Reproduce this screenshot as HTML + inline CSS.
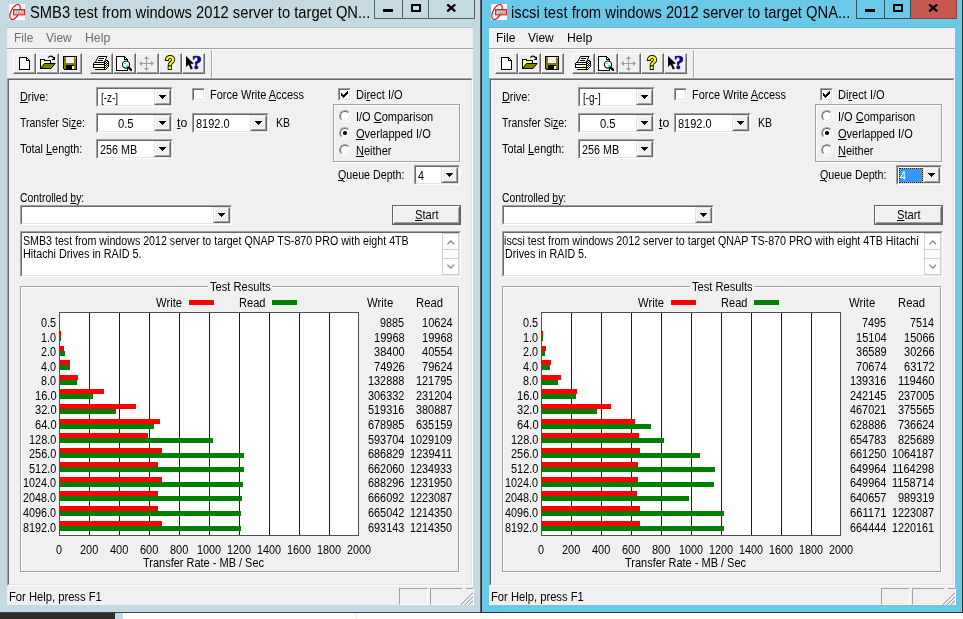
<!DOCTYPE html>
<html><head><meta charset="utf-8"><title>ATTO Disk Benchmark</title>
<style>
html,body{margin:0;padding:0;}
body{width:963px;height:619px;position:relative;overflow:hidden;background:#fff;}
div,span.t,span.q,svg{position:absolute;box-sizing:content-box;}
.win{overflow:hidden;will-change:transform;}
.t{white-space:nowrap;transform-origin:0 0;font-family:"Liberation Sans",sans-serif;}
.ms{font-size:12px;line-height:14px;}
.ui{font-size:12px;line-height:14px;}
.cap{font-size:15.6px;line-height:17px;}
.q{font-family:"Liberation Sans",sans-serif;font-weight:bold;line-height:1;}
u{text-decoration:underline;text-underline-offset:1px;text-decoration-thickness:1px;}
</style></head>
<body>
<div style="left:0px;top:613px;width:963px;height:6px;background:#fff;"></div>
<div style="left:0px;top:613px;width:115px;height:6px;background:#2d2d2d;"></div>
<div style="left:115px;top:613px;width:8px;height:6px;background:#c5d9e0;"></div>
<div style="left:356px;top:613px;width:1px;height:6px;background:#ececec;"></div>
<div class="win" style="left:0px;top:0;width:481px;height:613px"><div style="left:0px;top:0px;width:481px;height:612px;background:#c5d9e0;"></div><div style="left:7px;top:27px;width:466px;height:1px;background:#b5c8d0;"></div><div style="left:7px;top:28px;width:466px;height:577px;background:#f0f0f0;"></div><svg style="left:9px;top:4px" width="16" height="16" viewBox="0 0 16 16"><rect width="16" height="16" fill="#fff"/><ellipse cx="6" cy="8" rx="4" ry="8.2" transform="rotate(28 6 8)" fill="none" stroke="#f00" stroke-width="1.15"/><rect x="4.5" y="5.5" width="11" height="5.4" fill="#a4948a" stroke="#e21c24" stroke-width="1"/><text x="10" y="9.6" font-family="Liberation Sans,sans-serif" font-size="3.6" font-weight="bold" fill="#eee" text-anchor="middle">ATTO</text></svg><span id="Ltitle" class="t cap " style="left:29.8px;top:4px;color:#000;transform:scaleX(0.9438);">SMB3 test from windows 2012 server to target QN...</span><div style="left:374px;top:0px;width:1px;height:19px;background:#5a6468;"></div><div style="left:402px;top:0px;width:1px;height:18px;background:#5a6468;"></div><div style="left:428px;top:0px;width:1px;height:18px;background:#5a6468;"></div><div style="left:374px;top:18px;width:101px;height:1px;background:#5a6468;"></div><div style="left:474px;top:0px;width:1px;height:19px;background:#5a6468;"></div><div style="left:383px;top:9px;width:10px;height:3px;background:#000;"></div><div style="left:411px;top:4px;width:6px;height:4px;border:2px solid #000;border-top-width:2px;"></div><svg style="left:446px;top:4px" width="11" height="8" viewBox="0 0 11 8"><path d="M1.2 0.4 L9.2 7.4 M9.2 0.4 L1.2 7.4" stroke="#000" stroke-width="2.3" fill="none"/></svg><span id="Lm1" class="t ui " style="left:13.7px;top:31px;color:#6d6d6d;transform:scaleX(1.0053);">File</span><span id="Lm2" class="t ui " style="left:45.8px;top:31px;color:#6d6d6d;transform:scaleX(0.9962);">View</span><span id="Lm3" class="t ui " style="left:84.8px;top:31px;color:#6d6d6d;transform:scaleX(1.0240);">Help</span><div style="left:7px;top:48px;width:466px;height:1px;background:#a0a0a0;"></div><div style="left:7px;top:49px;width:466px;height:1px;background:#ffffff;"></div><div style="left:7px;top:77px;width:466px;height:1px;background:#f8f8f8;"></div><div style="left:211px;top:50px;width:1px;height:28px;background:#a8a8a8;"></div><div style="left:212px;top:50px;width:1px;height:28px;background:#ffffff;"></div><div style="left:13px;top:53px;width:21px;height:19px;border:1px solid;border-color:#ffffff #696969 #696969 #ffffff;background:#f0f0f0"><div style="left:0;top:0;width:20px;height:18px;border:0 solid #a0a0a0;border-width:0 1px 1px 0;"></div></div><div style="left:36px;top:53px;width:21px;height:19px;border:1px solid;border-color:#ffffff #696969 #696969 #ffffff;background:#f0f0f0"><div style="left:0;top:0;width:20px;height:18px;border:0 solid #a0a0a0;border-width:0 1px 1px 0;"></div></div><div style="left:59px;top:53px;width:21px;height:19px;border:1px solid;border-color:#ffffff #696969 #696969 #ffffff;background:#f0f0f0"><div style="left:0;top:0;width:20px;height:18px;border:0 solid #a0a0a0;border-width:0 1px 1px 0;"></div></div><div style="left:90px;top:53px;width:21px;height:19px;border:1px solid;border-color:#ffffff #696969 #696969 #ffffff;background:#f0f0f0"><div style="left:0;top:0;width:20px;height:18px;border:0 solid #a0a0a0;border-width:0 1px 1px 0;"></div></div><div style="left:113px;top:53px;width:21px;height:19px;border:1px solid;border-color:#ffffff #696969 #696969 #ffffff;background:#f0f0f0"><div style="left:0;top:0;width:20px;height:18px;border:0 solid #a0a0a0;border-width:0 1px 1px 0;"></div></div><div style="left:136px;top:53px;width:21px;height:19px;border:1px solid;border-color:#ffffff #696969 #696969 #ffffff;background:#f0f0f0"><div style="left:0;top:0;width:20px;height:18px;border:0 solid #a0a0a0;border-width:0 1px 1px 0;"></div></div><div style="left:159px;top:53px;width:21px;height:19px;border:1px solid;border-color:#ffffff #696969 #696969 #ffffff;background:#f0f0f0"><div style="left:0;top:0;width:20px;height:18px;border:0 solid #a0a0a0;border-width:0 1px 1px 0;"></div></div><div style="left:182px;top:53px;width:21px;height:19px;border:1px solid;border-color:#ffffff #696969 #696969 #ffffff;background:#f0f0f0"><div style="left:0;top:0;width:20px;height:18px;border:0 solid #a0a0a0;border-width:0 1px 1px 0;"></div></div><svg style="left:19px;top:57px" width="11" height="13" viewBox="0 0 11 13" shape-rendering="crispEdges"><path d="M0.5 0.5h7l3 3v9h-10z" fill="#fff" stroke="#000"/><path d="M7.5 0.5v3h3" fill="none" stroke="#000"/></svg><svg style="left:40px;top:55px" width="16" height="15" viewBox="0 0 16 15" shape-rendering="crispEdges"><path d="M8.3 2.6 Q11 -0.8 14.3 3.6" fill="none" stroke="#000" stroke-width="1.1" shape-rendering="auto"/><path d="M14.5 1.5V4.5H11.5" fill="none" stroke="#000"/><path d="M0.5 13.5V4.5H4.5V5.5H10.5V8.5" fill="#fbfb8c" stroke="#000"/><path d="M0.5 13.5L4.5 8.5H15.2L11 13.5z" fill="#808000" stroke="#000" shape-rendering="auto"/></svg><svg style="left:63px;top:56px" width="14" height="14" viewBox="0 0 14 14" shape-rendering="crispEdges"><path d="M0.5 0.5h13v13h-12l-1-1z" fill="#808000" stroke="#000"/><rect x="3" y="1" width="8" height="6" fill="#f0f0f0"/><rect x="3" y="9" width="8" height="4.5" fill="#000"/><rect x="9" y="10" width="2" height="3" fill="#fff"/><rect x="12" y="1" width="1" height="1" fill="#fff"/></svg><svg style="left:93px;top:56px" width="17" height="14" viewBox="0 0 17 14" shape-rendering="crispEdges"><path d="M11.5 6.5L13.5 4.5H14.5L15.5 5.5V10.5L12.5 13.5H11.5z" fill="#fff" stroke="#000"/><rect x="12" y="7" width="1" height="1" fill="#000"/><rect x="13" y="6" width="1" height="1" fill="#000"/><rect x="14" y="7" width="1" height="1" fill="#000"/><rect x="13" y="8" width="1" height="1" fill="#000"/><rect x="12" y="9" width="1" height="1" fill="#000"/><rect x="14" y="9" width="1" height="1" fill="#000"/><rect x="13" y="10" width="1" height="1" fill="#000"/><rect x="12" y="11" width="1" height="1" fill="#000"/><rect x="14" y="5" width="1" height="1" fill="#000"/><path d="M2.2 6.5L5.5 0.5H14L11.2 6.5" fill="#fff" stroke="#000" shape-rendering="auto"/><rect x="6" y="2" width="5" height="1" fill="#000"/><rect x="5" y="4" width="5" height="1" fill="#000"/><rect x="0" y="6" width="12" height="8" fill="#000"/><rect x="0" y="6" width="1" height="1" fill="#f0f0f0"/><rect x="0" y="12" width="2" height="2" fill="#f0f0f0"/><rect x="0" y="12" width="1" height="1" fill="#f0f0f0"/><rect x="1" y="7" width="10" height="1" fill="#fff"/><rect x="1" y="9" width="10" height="2" fill="#fff"/><rect x="7" y="10" width="3" height="1" fill="#ff0"/><rect x="2" y="12" width="9" height="1" fill="#fff"/></svg><svg style="left:116px;top:56px" width="16" height="15" viewBox="0 0 16 15" shape-rendering="crispEdges"><path d="M0.5 0.5h8l3 3v10.5h-11z" fill="#fff" stroke="#000"/><path d="M8.5 0.5v3h3" fill="none" stroke="#000"/><circle cx="10" cy="8.6" r="3.6" fill="#fff" stroke="#000" stroke-width="1.1" shape-rendering="auto"/><rect x="8" y="7" width="2" height="1" fill="#0ff"/><rect x="10" y="9" width="2" height="2" fill="#0ff"/><path d="M12.8 11.6L15.2 14" stroke="#000" stroke-width="2.2" stroke-linecap="round" shape-rendering="auto"/></svg><svg style="left:139px;top:56px" width="15" height="15" viewBox="0 0 15 15" shape-rendering="crispEdges"><path d="M7.5 1v13M1 7.5h13" stroke="#a0a0a0" fill="none"/><path d="M7.5 0L10 3H5zM7.5 15L10 12H5zM0 7.5L3 5V10zM15 7.5L12 5V10z" fill="#a0a0a0" shape-rendering="auto"/></svg><span class="q" style="left:164.6px;top:54.3px;color:#ff0;-webkit-text-stroke:1.9px #000;paint-order:stroke fill;font-size:18.5px;transform:scaleX(0.9);transform-origin:0 0;">?</span><svg style="left:186px;top:56px" width="8" height="14" viewBox="0 0 8 14"><path d="M0 0V11L2.6 8.6L4.8 13.6L6.8 12.8L4.6 7.8H8z" fill="#000"/></svg><span class="q" style="left:191.6px;top:52.7px;color:#000080;-webkit-text-stroke:0.7px #000080;font-size:19.5px;font-family:Liberation Serif,serif;transform:scaleX(1.02);transform-origin:0 0;">?</span><div style="left:7px;top:78px;width:464px;height:506px;border:1px solid;border-color:#a0a0a0 #ffffff #ffffff #a0a0a0;"><div style="left:0;top:0;width:462px;height:504px;border:1px solid;border-color:#696969 #e3e3e3 #e3e3e3 #696969;"></div></div><span id="Ll1" class="t ms " style="left:19.9px;top:90px;color:#000;transform:scaleX(0.9032);"><u>D</u>rive:</span><span id="Ll2" class="t ms " style="left:20.3px;top:116px;color:#000;transform:scaleX(0.8757);">Transfer Si<u>z</u>e:</span><span id="Ll3" class="t ms " style="left:20.3px;top:142px;color:#000;transform:scaleX(0.9072);">Total <u>L</u>ength:</span><div style="left:96px;top:87px;width:75px;height:18px;border:1px solid;border-color:#a0a0a0 #ffffff #ffffff #a0a0a0;"><div style="left:0;top:0;width:73px;height:16px;border:1px solid;border-color:#696969 #e3e3e3 #e3e3e3 #696969;background:#fff;"></div></div><div style="left:154px;top:89px;width:15px;height:14px;border:1px solid;border-color:#e3e3e3 #696969 #696969 #e3e3e3;"><div style="left:0;top:0;width:13px;height:12px;border:1px solid;border-color:#ffffff #a0a0a0 #a0a0a0 #ffffff;background:#f0f0f0;"></div></div><div style="left:159px;top:95px;width:7px;height:1px;background:#000;"></div><div style="left:160px;top:96px;width:5px;height:1px;background:#000;"></div><div style="left:161px;top:97px;width:3px;height:1px;background:#000;"></div><div style="left:162px;top:98px;width:1px;height:1px;background:#000;"></div><span id="Lc1" class="t ms " style="left:100.5px;top:91px;color:#000;transform:scaleX(0.8286);">[-z-]</span><div style="left:96px;top:113px;width:75px;height:18px;border:1px solid;border-color:#a0a0a0 #ffffff #ffffff #a0a0a0;"><div style="left:0;top:0;width:73px;height:16px;border:1px solid;border-color:#696969 #e3e3e3 #e3e3e3 #696969;background:#fff;"></div></div><div style="left:154px;top:115px;width:15px;height:14px;border:1px solid;border-color:#e3e3e3 #696969 #696969 #e3e3e3;"><div style="left:0;top:0;width:13px;height:12px;border:1px solid;border-color:#ffffff #a0a0a0 #a0a0a0 #ffffff;background:#f0f0f0;"></div></div><div style="left:159px;top:121px;width:7px;height:1px;background:#000;"></div><div style="left:160px;top:122px;width:5px;height:1px;background:#000;"></div><div style="left:161px;top:123px;width:3px;height:1px;background:#000;"></div><div style="left:162px;top:124px;width:1px;height:1px;background:#000;"></div><span id="Lc2" class="t ms " style="left:118.1px;top:117px;color:#000;transform:scaleX(0.9353);">0.5</span><div style="left:96px;top:139px;width:75px;height:18px;border:1px solid;border-color:#a0a0a0 #ffffff #ffffff #a0a0a0;"><div style="left:0;top:0;width:73px;height:16px;border:1px solid;border-color:#696969 #e3e3e3 #e3e3e3 #696969;background:#fff;"></div></div><div style="left:154px;top:141px;width:15px;height:14px;border:1px solid;border-color:#e3e3e3 #696969 #696969 #e3e3e3;"><div style="left:0;top:0;width:13px;height:12px;border:1px solid;border-color:#ffffff #a0a0a0 #a0a0a0 #ffffff;background:#f0f0f0;"></div></div><div style="left:159px;top:147px;width:7px;height:1px;background:#000;"></div><div style="left:160px;top:148px;width:5px;height:1px;background:#000;"></div><div style="left:161px;top:149px;width:3px;height:1px;background:#000;"></div><div style="left:162px;top:150px;width:1px;height:1px;background:#000;"></div><span id="Lc3" class="t ms " style="left:100.0px;top:143px;color:#000;transform:scaleX(0.8976);">256 MB</span><span id="Lto" class="t ms " style="left:176.6px;top:116px;color:#000;transform:scaleX(1.0200);"><u>t</u>o</span><div style="left:192px;top:113px;width:75px;height:18px;border:1px solid;border-color:#a0a0a0 #ffffff #ffffff #a0a0a0;"><div style="left:0;top:0;width:73px;height:16px;border:1px solid;border-color:#696969 #e3e3e3 #e3e3e3 #696969;background:#fff;"></div></div><div style="left:250px;top:115px;width:15px;height:14px;border:1px solid;border-color:#e3e3e3 #696969 #696969 #e3e3e3;"><div style="left:0;top:0;width:13px;height:12px;border:1px solid;border-color:#ffffff #a0a0a0 #a0a0a0 #ffffff;background:#f0f0f0;"></div></div><div style="left:255px;top:121px;width:7px;height:1px;background:#000;"></div><div style="left:256px;top:122px;width:5px;height:1px;background:#000;"></div><div style="left:257px;top:123px;width:3px;height:1px;background:#000;"></div><div style="left:258px;top:124px;width:1px;height:1px;background:#000;"></div><span id="Lc4" class="t ms " style="left:196.0px;top:117px;color:#000;transform:scaleX(0.9135);">8192.0</span><span id="Lkb" class="t ms " style="left:276.0px;top:116px;color:#000;transform:scaleX(0.8750);">KB</span><div style="left:192px;top:88px;width:11px;height:11px;border:1px solid;border-color:#a0a0a0 #ffffff #ffffff #a0a0a0;"><div style="left:0;top:0;width:9px;height:9px;border:1px solid;border-color:#696969 #e3e3e3 #e3e3e3 #696969;background:#fff;"></div></div><span id="Lfw" class="t ms " style="left:210.1px;top:88px;color:#000;transform:scaleX(0.9117);">Force Write <u>A</u>ccess</span><div style="left:338px;top:88px;width:11px;height:11px;border:1px solid;border-color:#a0a0a0 #ffffff #ffffff #a0a0a0;"><div style="left:0;top:0;width:9px;height:9px;border:1px solid;border-color:#696969 #e3e3e3 #e3e3e3 #696969;background:#fff;"></div></div><svg style="left:341px;top:91px" width="7" height="7" shape-rendering="crispEdges"><path d="M0 2h1v1h1v1h1v-1h1v-1h1v-1h1v-1h1v3h-1v1h-1v1h-1v1h-1v1h-1v-1h-1v-1h-1z" fill="#000"/></svg><span id="Ldi" class="t ms " style="left:356.1px;top:88px;color:#000;transform:scaleX(0.9196);">Di<u>r</u>ect I/O</span><div style="left:334px;top:105px;width:125px;height:56px;border:1px solid #fff;"></div><div style="left:333px;top:104px;width:125px;height:56px;border:1px solid #a0a0a0;"></div><div style="left:339px;top:110px;width:10px;height:10px;border-radius:50%;border:1px solid;border-color:#a0a0a0 #ffffff #ffffff #a0a0a0;transform:rotate(0deg);background:#fff"><div style="left:0;top:0;width:8px;height:8px;border-radius:50%;border:1px solid;border-color:#696969 #e3e3e3 #e3e3e3 #696969;background:#fff"></div></div><span id="Lr1" class="t ms " style="left:356.1px;top:110px;color:#000;transform:scaleX(0.9182);">I/O <u>C</u>omparison</span><div style="left:339px;top:127px;width:10px;height:10px;border-radius:50%;border:1px solid;border-color:#a0a0a0 #ffffff #ffffff #a0a0a0;transform:rotate(0deg);background:#fff"><div style="left:0;top:0;width:8px;height:8px;border-radius:50%;border:1px solid;border-color:#696969 #e3e3e3 #e3e3e3 #696969;background:#fff"></div></div><div style="left:343px;top:131px;width:4px;height:4px;border-radius:1.8px;background:#000"></div><span id="Lr2" class="t ms " style="left:356.1px;top:127px;color:#000;transform:scaleX(0.9182);"><u>O</u>verlapped I/O</span><div style="left:339px;top:144px;width:10px;height:10px;border-radius:50%;border:1px solid;border-color:#a0a0a0 #ffffff #ffffff #a0a0a0;transform:rotate(0deg);background:#fff"><div style="left:0;top:0;width:8px;height:8px;border-radius:50%;border:1px solid;border-color:#696969 #e3e3e3 #e3e3e3 #696969;background:#fff"></div></div><span id="Lr3" class="t ms " style="left:356.1px;top:144px;color:#000;transform:scaleX(0.9182);"><u>N</u>either</span><span id="Lqd" class="t ms " style="left:338.0px;top:168px;color:#000;transform:scaleX(0.8893);"><u>Q</u>ueue Depth:</span><div style="left:414px;top:165px;width:44px;height:18px;border:1px solid;border-color:#a0a0a0 #ffffff #ffffff #a0a0a0;"><div style="left:0;top:0;width:42px;height:16px;border:1px solid;border-color:#696969 #e3e3e3 #e3e3e3 #696969;background:#fff;"></div></div><div style="left:441px;top:167px;width:15px;height:14px;border:1px solid;border-color:#e3e3e3 #696969 #696969 #e3e3e3;"><div style="left:0;top:0;width:13px;height:12px;border:1px solid;border-color:#ffffff #a0a0a0 #a0a0a0 #ffffff;background:#f0f0f0;"></div></div><div style="left:446px;top:173px;width:7px;height:1px;background:#000;"></div><div style="left:447px;top:174px;width:5px;height:1px;background:#000;"></div><div style="left:448px;top:175px;width:3px;height:1px;background:#000;"></div><div style="left:449px;top:176px;width:1px;height:1px;background:#000;"></div><span id="Lq4" class="t ms " style="left:418.3px;top:169px;color:#000;transform:scaleX(0.9000);">4</span><span id="Lcb" class="t ms " style="left:19.8px;top:191px;color:#000;transform:scaleX(0.8676);">Controlled <u>b</u>y:</span><div style="left:20px;top:205px;width:210px;height:18px;border:1px solid;border-color:#a0a0a0 #ffffff #ffffff #a0a0a0;"><div style="left:0;top:0;width:208px;height:16px;border:1px solid;border-color:#696969 #e3e3e3 #e3e3e3 #696969;background:#fff;"></div></div><div style="left:213px;top:207px;width:15px;height:14px;border:1px solid;border-color:#e3e3e3 #696969 #696969 #e3e3e3;"><div style="left:0;top:0;width:13px;height:12px;border:1px solid;border-color:#ffffff #a0a0a0 #a0a0a0 #ffffff;background:#f0f0f0;"></div></div><div style="left:218px;top:213px;width:7px;height:1px;background:#000;"></div><div style="left:219px;top:214px;width:5px;height:1px;background:#000;"></div><div style="left:220px;top:215px;width:3px;height:1px;background:#000;"></div><div style="left:221px;top:216px;width:1px;height:1px;background:#000;"></div><div style="left:392px;top:205px;width:69px;height:20px;background:#646464;"></div><div style="left:393px;top:206px;width:65px;height:16px;border:1px solid;border-color:#ffffff #696969 #696969 #ffffff;"><div style="left:0;top:0;width:63px;height:14px;border:1px solid;border-color:#f0f0f0 #a0a0a0 #a0a0a0 #f0f0f0;background:#f0f0f0;"></div></div><span id="Lst" class="t ms " style="left:414.6px;top:208px;color:#000;transform:scaleX(0.9280);"><u>S</u>tart</span><div style="left:20px;top:231px;width:439px;height:44px;border:1px solid;border-color:#a0a0a0 #ffffff #ffffff #a0a0a0;"><div style="left:0;top:0;width:437px;height:42px;border:1px solid;border-color:#696969 #e3e3e3 #e3e3e3 #696969;background:#fff;"></div></div><span id="Ld1" class="t ms " style="left:22.7px;top:234px;color:#000;transform:scaleX(0.8878);">SMB3 test from windows 2012 server to target QNAP TS-870 PRO with eight 4TB</span><span id="Ld2" class="t ms " style="left:22.7px;top:247px;color:#000;transform:scaleX(0.8970);">Hitachi Drives in RAID 5.</span><div style="left:442px;top:233px;width:17px;height:42px;background:#fdfdfd;"></div><div style="left:442px;top:233px;width:1px;height:42px;background:#d0d0d0;"></div><div style="left:458px;top:233px;width:1px;height:42px;background:#d0d0d0;"></div><div style="left:442px;top:233px;width:17px;height:1px;background:#d0d0d0;"></div><div style="left:442px;top:274px;width:17px;height:1px;background:#d0d0d0;"></div><div style="left:442px;top:249px;width:17px;height:1px;background:#d0d0d0;"></div><div style="left:442px;top:258px;width:17px;height:1px;background:#d0d0d0;"></div><svg style="left:447px;top:240px" width="8" height="5" viewBox="0 0 8 5"><path d="M0.4 4.3 L3.75 0.9 L7.1 4.3" stroke="#909090" stroke-width="1.4" fill="none"/></svg><svg style="left:447px;top:264px" width="8" height="5" viewBox="0 0 8 5"><path d="M0.4 0.7 L3.75 4.1 L7.1 0.7" stroke="#909090" stroke-width="1.4" fill="none"/></svg><div style="left:21px;top:287px;width:437px;height:284px;border:1px solid #fff;"></div><div style="left:20px;top:286px;width:437px;height:284px;border:1px solid #a0a0a0;"></div><div style="left:208px;top:285px;width:64px;height:4px;background:#f0f0f0;"></div><span id="Ltr" class="t ms " style="left:210.1px;top:280px;color:#000;transform:scaleX(0.9262);">Test Results</span><span id="Llw" class="t ms " style="left:155.6px;top:296px;color:#000;transform:scaleX(0.9357);">Write</span><div style="left:189px;top:300px;width:25px;height:5px;background:#ff0000;"></div><span id="Llr" class="t ms " style="left:239.0px;top:296px;color:#000;transform:scaleX(0.9241);">Read</span><div style="left:272px;top:300px;width:25px;height:5px;background:#008000;"></div><span id="Lhw" class="t ms " style="left:367.4px;top:296px;color:#000;transform:scaleX(0.9429);">Write</span><span id="Lhr" class="t ms " style="left:415.8px;top:296px;color:#000;transform:scaleX(0.9414);">Read</span><div style="left:59px;top:312px;width:300px;height:224px;background:#505050;"></div><div style="left:60px;top:313px;width:298px;height:222px;background:#fff;"></div><div style="left:89px;top:313px;width:1px;height:222px;background:#0000ff;"></div><div style="left:119px;top:313px;width:1px;height:222px;background:#0000ff;"></div><div style="left:149px;top:313px;width:1px;height:222px;background:#0000ff;"></div><div style="left:179px;top:313px;width:1px;height:222px;background:#0000ff;"></div><div style="left:209px;top:313px;width:1px;height:222px;background:#0000ff;"></div><div style="left:239px;top:313px;width:1px;height:222px;background:#0000ff;"></div><div style="left:269px;top:313px;width:1px;height:222px;background:#0000ff;"></div><div style="left:299px;top:313px;width:1px;height:222px;background:#0000ff;"></div><div style="left:329px;top:313px;width:1px;height:222px;background:#0000ff;"></div><span id="Ly0" class="t ms " style="left:40.7px;top:316px;color:#000;transform:scaleX(0.9000);">0.5</span><span id="Lw0" class="t ms " style="left:379.5px;top:316px;color:#000;transform:scaleX(0.9000);">9885</span><span id="Lr0" class="t ms " style="left:421.6px;top:316px;color:#000;transform:scaleX(0.9182);">10624</span><div style="left:60px;top:331px;width:1px;height:5px;background:#ff0000;"></div><div style="left:60px;top:336px;width:1px;height:5px;background:#008000;"></div><span id="Ly1" class="t ms " style="left:40.7px;top:331px;color:#000;transform:scaleX(0.9000);">1.0</span><span id="Lw1" class="t ms " style="left:373.5px;top:331px;color:#000;transform:scaleX(0.9182);">19968</span><span id="Lr1" class="t ms " style="left:421.6px;top:331px;color:#000;transform:scaleX(0.9182);">19968</span><div style="left:60px;top:346px;width:4px;height:5px;background:#ff0000;"></div><div style="left:60px;top:351px;width:5px;height:5px;background:#008000;"></div><span id="Ly2" class="t ms " style="left:40.7px;top:345px;color:#000;transform:scaleX(0.9000);">2.0</span><span id="Lw2" class="t ms " style="left:373.5px;top:345px;color:#000;transform:scaleX(0.9182);">38400</span><span id="Lr2" class="t ms " style="left:421.6px;top:345px;color:#000;transform:scaleX(0.9182);">40554</span><div style="left:60px;top:360px;width:10px;height:5px;background:#ff0000;"></div><div style="left:60px;top:365px;width:10px;height:5px;background:#008000;"></div><span id="Ly3" class="t ms " style="left:40.7px;top:360px;color:#000;transform:scaleX(0.9000);">4.0</span><span id="Lw3" class="t ms " style="left:373.5px;top:360px;color:#000;transform:scaleX(0.9182);">74926</span><span id="Lr3" class="t ms " style="left:421.6px;top:360px;color:#000;transform:scaleX(0.9182);">79624</span><div style="left:60px;top:375px;width:18px;height:5px;background:#ff0000;"></div><div style="left:60px;top:380px;width:17px;height:5px;background:#008000;"></div><span id="Ly4" class="t ms " style="left:40.7px;top:374px;color:#000;transform:scaleX(0.9000);">8.0</span><span id="Lw4" class="t ms " style="left:367.5px;top:374px;color:#000;transform:scaleX(0.9075);">132888</span><span id="Lr4" class="t ms " style="left:415.6px;top:374px;color:#000;transform:scaleX(0.9075);">121795</span><div style="left:60px;top:389px;width:44px;height:5px;background:#ff0000;"></div><div style="left:60px;top:394px;width:33px;height:5px;background:#008000;"></div><span id="Ly5" class="t ms " style="left:34.7px;top:389px;color:#000;transform:scaleX(0.9261);">16.0</span><span id="Lw5" class="t ms " style="left:367.5px;top:389px;color:#000;transform:scaleX(0.9075);">306332</span><span id="Lr5" class="t ms " style="left:415.6px;top:389px;color:#000;transform:scaleX(0.9075);">231204</span><div style="left:60px;top:404px;width:76px;height:5px;background:#ff0000;"></div><div style="left:60px;top:409px;width:56px;height:5px;background:#008000;"></div><span id="Ly6" class="t ms " style="left:34.7px;top:403px;color:#000;transform:scaleX(0.9261);">32.0</span><span id="Lw6" class="t ms " style="left:367.5px;top:403px;color:#000;transform:scaleX(0.9075);">519316</span><span id="Lr6" class="t ms " style="left:415.6px;top:403px;color:#000;transform:scaleX(0.9075);">380887</span><div style="left:60px;top:419px;width:100px;height:5px;background:#ff0000;"></div><div style="left:60px;top:424px;width:94px;height:5px;background:#008000;"></div><span id="Ly7" class="t ms " style="left:34.7px;top:418px;color:#000;transform:scaleX(0.9261);">64.0</span><span id="Lw7" class="t ms " style="left:367.5px;top:418px;color:#000;transform:scaleX(0.9075);">678985</span><span id="Lr7" class="t ms " style="left:415.6px;top:418px;color:#000;transform:scaleX(0.9075);">635159</span><div style="left:60px;top:433px;width:88px;height:5px;background:#ff0000;"></div><div style="left:60px;top:438px;width:153px;height:5px;background:#008000;"></div><span id="Ly8" class="t ms " style="left:28.7px;top:433px;color:#000;transform:scaleX(0.9100);">128.0</span><span id="Lw8" class="t ms " style="left:367.5px;top:433px;color:#000;transform:scaleX(0.9075);">593704</span><span id="Lr8" class="t ms " style="left:409.6px;top:433px;color:#000;transform:scaleX(0.9000);">1029109</span><div style="left:60px;top:448px;width:102px;height:5px;background:#ff0000;"></div><div style="left:60px;top:453px;width:184px;height:5px;background:#008000;"></div><span id="Ly9" class="t ms " style="left:28.7px;top:447px;color:#000;transform:scaleX(0.9100);">256.0</span><span id="Lw9" class="t ms " style="left:367.5px;top:447px;color:#000;transform:scaleX(0.9075);">686829</span><span id="Lr9" class="t ms " style="left:409.6px;top:447px;color:#000;transform:scaleX(0.9196);">1239411</span><div style="left:60px;top:462px;width:98px;height:5px;background:#ff0000;"></div><div style="left:60px;top:467px;width:184px;height:5px;background:#008000;"></div><span id="Ly10" class="t ms " style="left:28.7px;top:462px;color:#000;transform:scaleX(0.9100);">512.0</span><span id="Lw10" class="t ms " style="left:367.5px;top:462px;color:#000;transform:scaleX(0.9075);">662060</span><span id="Lr10" class="t ms " style="left:409.6px;top:462px;color:#000;transform:scaleX(0.9000);">1234933</span><div style="left:60px;top:477px;width:102px;height:5px;background:#ff0000;"></div><div style="left:60px;top:482px;width:183px;height:5px;background:#008000;"></div><span id="Ly11" class="t ms " style="left:22.7px;top:476px;color:#000;transform:scaleX(0.9000);">1024.0</span><span id="Lw11" class="t ms " style="left:367.5px;top:476px;color:#000;transform:scaleX(0.9075);">688296</span><span id="Lr11" class="t ms " style="left:409.6px;top:476px;color:#000;transform:scaleX(0.9000);">1231950</span><div style="left:60px;top:491px;width:98px;height:5px;background:#ff0000;"></div><div style="left:60px;top:496px;width:182px;height:5px;background:#008000;"></div><span id="Ly12" class="t ms " style="left:22.7px;top:491px;color:#000;transform:scaleX(0.9000);">2048.0</span><span id="Lw12" class="t ms " style="left:367.5px;top:491px;color:#000;transform:scaleX(0.9075);">666092</span><span id="Lr12" class="t ms " style="left:409.6px;top:491px;color:#000;transform:scaleX(0.9000);">1223087</span><div style="left:60px;top:506px;width:98px;height:5px;background:#ff0000;"></div><div style="left:60px;top:511px;width:181px;height:5px;background:#008000;"></div><span id="Ly13" class="t ms " style="left:22.7px;top:506px;color:#000;transform:scaleX(0.9000);">4096.0</span><span id="Lw13" class="t ms " style="left:367.5px;top:506px;color:#000;transform:scaleX(0.9075);">665042</span><span id="Lr13" class="t ms " style="left:409.6px;top:506px;color:#000;transform:scaleX(0.9000);">1214350</span><div style="left:60px;top:521px;width:102px;height:5px;background:#ff0000;"></div><div style="left:60px;top:526px;width:181px;height:5px;background:#008000;"></div><span id="Ly14" class="t ms " style="left:22.7px;top:521px;color:#000;transform:scaleX(0.9000);">8192.0</span><span id="Lw14" class="t ms " style="left:367.5px;top:521px;color:#000;transform:scaleX(0.9075);">693143</span><span id="Lr14" class="t ms " style="left:409.6px;top:521px;color:#000;transform:scaleX(0.9000);">1214350</span><span id="Lx0" class="t ms " style="left:55.5px;top:543px;color:#000;transform:scaleX(0.9000);">0</span><span id="Lx1" class="t ms " style="left:79.5px;top:543px;color:#000;transform:scaleX(0.9150);">200</span><span id="Lx2" class="t ms " style="left:109.5px;top:543px;color:#000;transform:scaleX(0.9150);">400</span><span id="Lx3" class="t ms " style="left:139.5px;top:543px;color:#000;transform:scaleX(0.9150);">600</span><span id="Lx4" class="t ms " style="left:169.5px;top:543px;color:#000;transform:scaleX(0.9150);">800</span><span id="Lx5" class="t ms " style="left:196.5px;top:543px;color:#000;transform:scaleX(0.9000);">1000</span><span id="Lx6" class="t ms " style="left:226.5px;top:543px;color:#000;transform:scaleX(0.9000);">1200</span><span id="Lx7" class="t ms " style="left:256.5px;top:543px;color:#000;transform:scaleX(0.9000);">1400</span><span id="Lx8" class="t ms " style="left:286.5px;top:543px;color:#000;transform:scaleX(0.9000);">1600</span><span id="Lx9" class="t ms " style="left:316.5px;top:543px;color:#000;transform:scaleX(0.9000);">1800</span><span id="Lx10" class="t ms " style="left:346.5px;top:543px;color:#000;transform:scaleX(0.9000);">2000</span><span id="Lax" class="t ms " style="left:143.4px;top:556px;color:#000;transform:scaleX(0.9152);">Transfer Rate - MB / Sec</span><span id="Lsb" class="t ui " style="left:8.8px;top:590px;color:#000;transform:scaleX(0.9333);">For Help, press F1</span><div style="left:399px;top:588px;width:27px;height:15px;border:1px solid;border-color:#a0a0a0 #ffffff #ffffff #a0a0a0"></div><div style="left:430px;top:588px;width:42px;height:15px;border:1px solid;border-color:#a0a0a0 #ffffff #ffffff #a0a0a0"></div><div style="left:461px;top:589px;width:12px;height:16px;background:#f0f0f0;"></div><div style="left:462px;top:588px;width:4px;height:1px;background:#f0f0f0;"></div><svg style="left:460px;top:592px" width="13" height="13" viewBox="0 0 13 13"><path d="M1 13 L13 1 M5 13 L13 5 M9 13 L13 9" stroke="#a0a0a0" stroke-width="1.2" fill="none"/><path d="M2 13 L13 2 M6 13 L13 6 M10 13 L13 10" stroke="#fff" stroke-width="1" fill="none"/></svg></div>
<div style="left:480px;top:0px;width:1px;height:613px;background:#5a6066;"></div>
<div style="left:481px;top:0px;width:1px;height:613px;background:#2e2e36;"></div>
<div style="left:0px;top:612px;width:481px;height:1px;background:#46464c;"></div>
<div class="win" style="left:482px;top:0;width:481px;height:613px"><div style="left:0px;top:0px;width:481px;height:612px;background:#6bc9e8;"></div><div style="left:7px;top:27px;width:466px;height:1px;background:#60b6d4;"></div><div style="left:7px;top:28px;width:466px;height:577px;background:#f0f0f0;"></div><svg style="left:9px;top:4px" width="16" height="16" viewBox="0 0 16 16"><rect width="16" height="16" fill="#fff"/><ellipse cx="6" cy="8" rx="4" ry="8.2" transform="rotate(28 6 8)" fill="none" stroke="#f00" stroke-width="1.15"/><rect x="4.5" y="5.5" width="11" height="5.4" fill="#a4948a" stroke="#e21c24" stroke-width="1"/><text x="10" y="9.6" font-family="Liberation Sans,sans-serif" font-size="3.6" font-weight="bold" fill="#eee" text-anchor="middle">ATTO</text></svg><span id="Rtitle" class="t cap " style="left:29.4px;top:4px;color:#000;transform:scaleX(0.9457);">iscsi test from windows 2012 server to target QNA...</span><div style="left:374px;top:0px;width:1px;height:19px;background:#30505c;"></div><div style="left:402px;top:0px;width:1px;height:18px;background:#30505c;"></div><div style="left:428px;top:0px;width:1px;height:18px;background:#30505c;"></div><div style="left:374px;top:18px;width:101px;height:1px;background:#30505c;"></div><div style="left:429px;top:0px;width:46px;height:18px;background:#c75850;"></div><div style="left:474px;top:0px;width:1px;height:19px;background:#8a4038;"></div><div style="left:429px;top:18px;width:46px;height:1px;background:#8a4038;"></div><div style="left:383px;top:9px;width:10px;height:3px;background:#000;"></div><div style="left:411px;top:4px;width:6px;height:4px;border:2px solid #000;border-top-width:2px;"></div><svg style="left:446px;top:4px" width="11" height="8" viewBox="0 0 11 8"><path d="M1.2 0.4 L9.2 7.4 M9.2 0.4 L1.2 7.4" stroke="#000" stroke-width="2.3" fill="none"/></svg><span id="Rm1" class="t ui " style="left:13.7px;top:31px;color:#000;transform:scaleX(1.0053);">File</span><span id="Rm2" class="t ui " style="left:45.8px;top:31px;color:#000;transform:scaleX(0.9962);">View</span><span id="Rm3" class="t ui " style="left:84.8px;top:31px;color:#000;transform:scaleX(1.0240);">Help</span><div style="left:7px;top:48px;width:466px;height:1px;background:#a0a0a0;"></div><div style="left:7px;top:49px;width:466px;height:1px;background:#ffffff;"></div><div style="left:7px;top:77px;width:466px;height:1px;background:#f8f8f8;"></div><div style="left:211px;top:50px;width:1px;height:28px;background:#a8a8a8;"></div><div style="left:212px;top:50px;width:1px;height:28px;background:#ffffff;"></div><div style="left:13px;top:53px;width:21px;height:19px;border:1px solid;border-color:#ffffff #696969 #696969 #ffffff;background:#f0f0f0"><div style="left:0;top:0;width:20px;height:18px;border:0 solid #a0a0a0;border-width:0 1px 1px 0;"></div></div><div style="left:36px;top:53px;width:21px;height:19px;border:1px solid;border-color:#ffffff #696969 #696969 #ffffff;background:#f0f0f0"><div style="left:0;top:0;width:20px;height:18px;border:0 solid #a0a0a0;border-width:0 1px 1px 0;"></div></div><div style="left:59px;top:53px;width:21px;height:19px;border:1px solid;border-color:#ffffff #696969 #696969 #ffffff;background:#f0f0f0"><div style="left:0;top:0;width:20px;height:18px;border:0 solid #a0a0a0;border-width:0 1px 1px 0;"></div></div><div style="left:90px;top:53px;width:21px;height:19px;border:1px solid;border-color:#ffffff #696969 #696969 #ffffff;background:#f0f0f0"><div style="left:0;top:0;width:20px;height:18px;border:0 solid #a0a0a0;border-width:0 1px 1px 0;"></div></div><div style="left:113px;top:53px;width:21px;height:19px;border:1px solid;border-color:#ffffff #696969 #696969 #ffffff;background:#f0f0f0"><div style="left:0;top:0;width:20px;height:18px;border:0 solid #a0a0a0;border-width:0 1px 1px 0;"></div></div><div style="left:136px;top:53px;width:21px;height:19px;border:1px solid;border-color:#ffffff #696969 #696969 #ffffff;background:#f0f0f0"><div style="left:0;top:0;width:20px;height:18px;border:0 solid #a0a0a0;border-width:0 1px 1px 0;"></div></div><div style="left:159px;top:53px;width:21px;height:19px;border:1px solid;border-color:#ffffff #696969 #696969 #ffffff;background:#f0f0f0"><div style="left:0;top:0;width:20px;height:18px;border:0 solid #a0a0a0;border-width:0 1px 1px 0;"></div></div><div style="left:182px;top:53px;width:21px;height:19px;border:1px solid;border-color:#ffffff #696969 #696969 #ffffff;background:#f0f0f0"><div style="left:0;top:0;width:20px;height:18px;border:0 solid #a0a0a0;border-width:0 1px 1px 0;"></div></div><svg style="left:19px;top:57px" width="11" height="13" viewBox="0 0 11 13" shape-rendering="crispEdges"><path d="M0.5 0.5h7l3 3v9h-10z" fill="#fff" stroke="#000"/><path d="M7.5 0.5v3h3" fill="none" stroke="#000"/></svg><svg style="left:40px;top:55px" width="16" height="15" viewBox="0 0 16 15" shape-rendering="crispEdges"><path d="M8.3 2.6 Q11 -0.8 14.3 3.6" fill="none" stroke="#000" stroke-width="1.1" shape-rendering="auto"/><path d="M14.5 1.5V4.5H11.5" fill="none" stroke="#000"/><path d="M0.5 13.5V4.5H4.5V5.5H10.5V8.5" fill="#fbfb8c" stroke="#000"/><path d="M0.5 13.5L4.5 8.5H15.2L11 13.5z" fill="#808000" stroke="#000" shape-rendering="auto"/></svg><svg style="left:63px;top:56px" width="14" height="14" viewBox="0 0 14 14" shape-rendering="crispEdges"><path d="M0.5 0.5h13v13h-12l-1-1z" fill="#808000" stroke="#000"/><rect x="3" y="1" width="8" height="6" fill="#f0f0f0"/><rect x="3" y="9" width="8" height="4.5" fill="#000"/><rect x="9" y="10" width="2" height="3" fill="#fff"/><rect x="12" y="1" width="1" height="1" fill="#fff"/></svg><svg style="left:93px;top:56px" width="17" height="14" viewBox="0 0 17 14" shape-rendering="crispEdges"><path d="M11.5 6.5L13.5 4.5H14.5L15.5 5.5V10.5L12.5 13.5H11.5z" fill="#fff" stroke="#000"/><rect x="12" y="7" width="1" height="1" fill="#000"/><rect x="13" y="6" width="1" height="1" fill="#000"/><rect x="14" y="7" width="1" height="1" fill="#000"/><rect x="13" y="8" width="1" height="1" fill="#000"/><rect x="12" y="9" width="1" height="1" fill="#000"/><rect x="14" y="9" width="1" height="1" fill="#000"/><rect x="13" y="10" width="1" height="1" fill="#000"/><rect x="12" y="11" width="1" height="1" fill="#000"/><rect x="14" y="5" width="1" height="1" fill="#000"/><path d="M2.2 6.5L5.5 0.5H14L11.2 6.5" fill="#fff" stroke="#000" shape-rendering="auto"/><rect x="6" y="2" width="5" height="1" fill="#000"/><rect x="5" y="4" width="5" height="1" fill="#000"/><rect x="0" y="6" width="12" height="8" fill="#000"/><rect x="0" y="6" width="1" height="1" fill="#f0f0f0"/><rect x="0" y="12" width="2" height="2" fill="#f0f0f0"/><rect x="0" y="12" width="1" height="1" fill="#f0f0f0"/><rect x="1" y="7" width="10" height="1" fill="#fff"/><rect x="1" y="9" width="10" height="2" fill="#fff"/><rect x="7" y="10" width="3" height="1" fill="#ff0"/><rect x="2" y="12" width="9" height="1" fill="#fff"/></svg><svg style="left:116px;top:56px" width="16" height="15" viewBox="0 0 16 15" shape-rendering="crispEdges"><path d="M0.5 0.5h8l3 3v10.5h-11z" fill="#fff" stroke="#000"/><path d="M8.5 0.5v3h3" fill="none" stroke="#000"/><circle cx="10" cy="8.6" r="3.6" fill="#fff" stroke="#000" stroke-width="1.1" shape-rendering="auto"/><rect x="8" y="7" width="2" height="1" fill="#0ff"/><rect x="10" y="9" width="2" height="2" fill="#0ff"/><path d="M12.8 11.6L15.2 14" stroke="#000" stroke-width="2.2" stroke-linecap="round" shape-rendering="auto"/></svg><svg style="left:139px;top:56px" width="15" height="15" viewBox="0 0 15 15" shape-rendering="crispEdges"><path d="M7.5 1v13M1 7.5h13" stroke="#a0a0a0" fill="none"/><path d="M7.5 0L10 3H5zM7.5 15L10 12H5zM0 7.5L3 5V10zM15 7.5L12 5V10z" fill="#a0a0a0" shape-rendering="auto"/></svg><span class="q" style="left:164.6px;top:54.3px;color:#ff0;-webkit-text-stroke:1.9px #000;paint-order:stroke fill;font-size:18.5px;transform:scaleX(0.9);transform-origin:0 0;">?</span><svg style="left:186px;top:56px" width="8" height="14" viewBox="0 0 8 14"><path d="M0 0V11L2.6 8.6L4.8 13.6L6.8 12.8L4.6 7.8H8z" fill="#000"/></svg><span class="q" style="left:191.6px;top:52.7px;color:#000080;-webkit-text-stroke:0.7px #000080;font-size:19.5px;font-family:Liberation Serif,serif;transform:scaleX(1.02);transform-origin:0 0;">?</span><div style="left:7px;top:78px;width:464px;height:506px;border:1px solid;border-color:#a0a0a0 #ffffff #ffffff #a0a0a0;"><div style="left:0;top:0;width:462px;height:504px;border:1px solid;border-color:#696969 #e3e3e3 #e3e3e3 #696969;"></div></div><span id="Rl1" class="t ms " style="left:19.9px;top:90px;color:#000;transform:scaleX(0.9032);"><u>D</u>rive:</span><span id="Rl2" class="t ms " style="left:20.3px;top:116px;color:#000;transform:scaleX(0.8757);">Transfer Si<u>z</u>e:</span><span id="Rl3" class="t ms " style="left:20.3px;top:142px;color:#000;transform:scaleX(0.9072);">Total <u>L</u>ength:</span><div style="left:96px;top:87px;width:75px;height:18px;border:1px solid;border-color:#a0a0a0 #ffffff #ffffff #a0a0a0;"><div style="left:0;top:0;width:73px;height:16px;border:1px solid;border-color:#696969 #e3e3e3 #e3e3e3 #696969;background:#fff;"></div></div><div style="left:154px;top:89px;width:15px;height:14px;border:1px solid;border-color:#e3e3e3 #696969 #696969 #e3e3e3;"><div style="left:0;top:0;width:13px;height:12px;border:1px solid;border-color:#ffffff #a0a0a0 #a0a0a0 #ffffff;background:#f0f0f0;"></div></div><div style="left:159px;top:95px;width:7px;height:1px;background:#000;"></div><div style="left:160px;top:96px;width:5px;height:1px;background:#000;"></div><div style="left:161px;top:97px;width:3px;height:1px;background:#000;"></div><div style="left:162px;top:98px;width:1px;height:1px;background:#000;"></div><span id="Rc1" class="t ms " style="left:100.5px;top:91px;color:#000;transform:scaleX(0.8286);">[-g-]</span><div style="left:96px;top:113px;width:75px;height:18px;border:1px solid;border-color:#a0a0a0 #ffffff #ffffff #a0a0a0;"><div style="left:0;top:0;width:73px;height:16px;border:1px solid;border-color:#696969 #e3e3e3 #e3e3e3 #696969;background:#fff;"></div></div><div style="left:154px;top:115px;width:15px;height:14px;border:1px solid;border-color:#e3e3e3 #696969 #696969 #e3e3e3;"><div style="left:0;top:0;width:13px;height:12px;border:1px solid;border-color:#ffffff #a0a0a0 #a0a0a0 #ffffff;background:#f0f0f0;"></div></div><div style="left:159px;top:121px;width:7px;height:1px;background:#000;"></div><div style="left:160px;top:122px;width:5px;height:1px;background:#000;"></div><div style="left:161px;top:123px;width:3px;height:1px;background:#000;"></div><div style="left:162px;top:124px;width:1px;height:1px;background:#000;"></div><span id="Rc2" class="t ms " style="left:118.1px;top:117px;color:#000;transform:scaleX(0.9353);">0.5</span><div style="left:96px;top:139px;width:75px;height:18px;border:1px solid;border-color:#a0a0a0 #ffffff #ffffff #a0a0a0;"><div style="left:0;top:0;width:73px;height:16px;border:1px solid;border-color:#696969 #e3e3e3 #e3e3e3 #696969;background:#fff;"></div></div><div style="left:154px;top:141px;width:15px;height:14px;border:1px solid;border-color:#e3e3e3 #696969 #696969 #e3e3e3;"><div style="left:0;top:0;width:13px;height:12px;border:1px solid;border-color:#ffffff #a0a0a0 #a0a0a0 #ffffff;background:#f0f0f0;"></div></div><div style="left:159px;top:147px;width:7px;height:1px;background:#000;"></div><div style="left:160px;top:148px;width:5px;height:1px;background:#000;"></div><div style="left:161px;top:149px;width:3px;height:1px;background:#000;"></div><div style="left:162px;top:150px;width:1px;height:1px;background:#000;"></div><span id="Rc3" class="t ms " style="left:100.0px;top:143px;color:#000;transform:scaleX(0.8976);">256 MB</span><span id="Rto" class="t ms " style="left:176.6px;top:116px;color:#000;transform:scaleX(1.0200);"><u>t</u>o</span><div style="left:192px;top:113px;width:75px;height:18px;border:1px solid;border-color:#a0a0a0 #ffffff #ffffff #a0a0a0;"><div style="left:0;top:0;width:73px;height:16px;border:1px solid;border-color:#696969 #e3e3e3 #e3e3e3 #696969;background:#fff;"></div></div><div style="left:250px;top:115px;width:15px;height:14px;border:1px solid;border-color:#e3e3e3 #696969 #696969 #e3e3e3;"><div style="left:0;top:0;width:13px;height:12px;border:1px solid;border-color:#ffffff #a0a0a0 #a0a0a0 #ffffff;background:#f0f0f0;"></div></div><div style="left:255px;top:121px;width:7px;height:1px;background:#000;"></div><div style="left:256px;top:122px;width:5px;height:1px;background:#000;"></div><div style="left:257px;top:123px;width:3px;height:1px;background:#000;"></div><div style="left:258px;top:124px;width:1px;height:1px;background:#000;"></div><span id="Rc4" class="t ms " style="left:196.0px;top:117px;color:#000;transform:scaleX(0.9135);">8192.0</span><span id="Rkb" class="t ms " style="left:276.0px;top:116px;color:#000;transform:scaleX(0.8750);">KB</span><div style="left:192px;top:88px;width:11px;height:11px;border:1px solid;border-color:#a0a0a0 #ffffff #ffffff #a0a0a0;"><div style="left:0;top:0;width:9px;height:9px;border:1px solid;border-color:#696969 #e3e3e3 #e3e3e3 #696969;background:#fff;"></div></div><span id="Rfw" class="t ms " style="left:210.1px;top:88px;color:#000;transform:scaleX(0.9117);">Force Write <u>A</u>ccess</span><div style="left:338px;top:88px;width:11px;height:11px;border:1px solid;border-color:#a0a0a0 #ffffff #ffffff #a0a0a0;"><div style="left:0;top:0;width:9px;height:9px;border:1px solid;border-color:#696969 #e3e3e3 #e3e3e3 #696969;background:#fff;"></div></div><svg style="left:341px;top:91px" width="7" height="7" shape-rendering="crispEdges"><path d="M0 2h1v1h1v1h1v-1h1v-1h1v-1h1v-1h1v3h-1v1h-1v1h-1v1h-1v1h-1v-1h-1v-1h-1z" fill="#000"/></svg><span id="Rdi" class="t ms " style="left:356.1px;top:88px;color:#000;transform:scaleX(0.9196);">Di<u>r</u>ect I/O</span><div style="left:334px;top:105px;width:125px;height:56px;border:1px solid #fff;"></div><div style="left:333px;top:104px;width:125px;height:56px;border:1px solid #a0a0a0;"></div><div style="left:339px;top:110px;width:10px;height:10px;border-radius:50%;border:1px solid;border-color:#a0a0a0 #ffffff #ffffff #a0a0a0;transform:rotate(0deg);background:#fff"><div style="left:0;top:0;width:8px;height:8px;border-radius:50%;border:1px solid;border-color:#696969 #e3e3e3 #e3e3e3 #696969;background:#fff"></div></div><span id="Rr1" class="t ms " style="left:356.1px;top:110px;color:#000;transform:scaleX(0.9182);">I/O <u>C</u>omparison</span><div style="left:339px;top:127px;width:10px;height:10px;border-radius:50%;border:1px solid;border-color:#a0a0a0 #ffffff #ffffff #a0a0a0;transform:rotate(0deg);background:#fff"><div style="left:0;top:0;width:8px;height:8px;border-radius:50%;border:1px solid;border-color:#696969 #e3e3e3 #e3e3e3 #696969;background:#fff"></div></div><div style="left:343px;top:131px;width:4px;height:4px;border-radius:1.8px;background:#000"></div><span id="Rr2" class="t ms " style="left:356.1px;top:127px;color:#000;transform:scaleX(0.9182);"><u>O</u>verlapped I/O</span><div style="left:339px;top:144px;width:10px;height:10px;border-radius:50%;border:1px solid;border-color:#a0a0a0 #ffffff #ffffff #a0a0a0;transform:rotate(0deg);background:#fff"><div style="left:0;top:0;width:8px;height:8px;border-radius:50%;border:1px solid;border-color:#696969 #e3e3e3 #e3e3e3 #696969;background:#fff"></div></div><span id="Rr3" class="t ms " style="left:356.1px;top:144px;color:#000;transform:scaleX(0.9182);"><u>N</u>either</span><span id="Rqd" class="t ms " style="left:338.0px;top:168px;color:#000;transform:scaleX(0.8893);"><u>Q</u>ueue Depth:</span><div style="left:414px;top:165px;width:44px;height:18px;border:1px solid;border-color:#a0a0a0 #ffffff #ffffff #a0a0a0;"><div style="left:0;top:0;width:42px;height:16px;border:1px solid;border-color:#696969 #e3e3e3 #e3e3e3 #696969;background:#fff;"></div></div><div style="left:441px;top:167px;width:15px;height:14px;border:1px solid;border-color:#e3e3e3 #696969 #696969 #e3e3e3;"><div style="left:0;top:0;width:13px;height:12px;border:1px solid;border-color:#ffffff #a0a0a0 #a0a0a0 #ffffff;background:#f0f0f0;"></div></div><div style="left:446px;top:173px;width:7px;height:1px;background:#000;"></div><div style="left:447px;top:174px;width:5px;height:1px;background:#000;"></div><div style="left:448px;top:175px;width:3px;height:1px;background:#000;"></div><div style="left:449px;top:176px;width:1px;height:1px;background:#000;"></div><div style="left:417px;top:168px;width:24px;height:15px;background:#3399ff;box-shadow:inset 0 0 0 1px #e8963c;outline:1px dotted #202020;outline-offset:-1px;"></div><span id="Rq4" class="t ms " style="left:418.3px;top:169px;color:#fff;transform:scaleX(0.9000);">4</span><span id="Rcb" class="t ms " style="left:19.8px;top:191px;color:#000;transform:scaleX(0.8676);">Controlled <u>b</u>y:</span><div style="left:20px;top:205px;width:210px;height:18px;border:1px solid;border-color:#a0a0a0 #ffffff #ffffff #a0a0a0;"><div style="left:0;top:0;width:208px;height:16px;border:1px solid;border-color:#696969 #e3e3e3 #e3e3e3 #696969;background:#fff;"></div></div><div style="left:213px;top:207px;width:15px;height:14px;border:1px solid;border-color:#e3e3e3 #696969 #696969 #e3e3e3;"><div style="left:0;top:0;width:13px;height:12px;border:1px solid;border-color:#ffffff #a0a0a0 #a0a0a0 #ffffff;background:#f0f0f0;"></div></div><div style="left:218px;top:213px;width:7px;height:1px;background:#000;"></div><div style="left:219px;top:214px;width:5px;height:1px;background:#000;"></div><div style="left:220px;top:215px;width:3px;height:1px;background:#000;"></div><div style="left:221px;top:216px;width:1px;height:1px;background:#000;"></div><div style="left:392px;top:205px;width:69px;height:20px;background:#646464;"></div><div style="left:393px;top:206px;width:65px;height:16px;border:1px solid;border-color:#ffffff #696969 #696969 #ffffff;"><div style="left:0;top:0;width:63px;height:14px;border:1px solid;border-color:#f0f0f0 #a0a0a0 #a0a0a0 #f0f0f0;background:#f0f0f0;"></div></div><span id="Rst" class="t ms " style="left:414.6px;top:208px;color:#000;transform:scaleX(0.9280);"><u>S</u>tart</span><div style="left:20px;top:231px;width:439px;height:44px;border:1px solid;border-color:#a0a0a0 #ffffff #ffffff #a0a0a0;"><div style="left:0;top:0;width:437px;height:42px;border:1px solid;border-color:#696969 #e3e3e3 #e3e3e3 #696969;background:#fff;"></div></div><span id="Rd1" class="t ms " style="left:22.2px;top:234px;color:#000;transform:scaleX(0.8914);">iscsi test from windows 2012 server to target QNAP TS-870 PRO with eight 4TB Hitachi</span><span id="Rd2" class="t ms " style="left:22.7px;top:247px;color:#000;transform:scaleX(0.8913);">Drives in RAID 5.</span><div style="left:442px;top:233px;width:17px;height:42px;background:#fdfdfd;"></div><div style="left:442px;top:233px;width:1px;height:42px;background:#d0d0d0;"></div><div style="left:458px;top:233px;width:1px;height:42px;background:#d0d0d0;"></div><div style="left:442px;top:233px;width:17px;height:1px;background:#d0d0d0;"></div><div style="left:442px;top:274px;width:17px;height:1px;background:#d0d0d0;"></div><div style="left:442px;top:249px;width:17px;height:1px;background:#d0d0d0;"></div><div style="left:442px;top:258px;width:17px;height:1px;background:#d0d0d0;"></div><svg style="left:447px;top:240px" width="8" height="5" viewBox="0 0 8 5"><path d="M0.4 4.3 L3.75 0.9 L7.1 4.3" stroke="#909090" stroke-width="1.4" fill="none"/></svg><svg style="left:447px;top:264px" width="8" height="5" viewBox="0 0 8 5"><path d="M0.4 0.7 L3.75 4.1 L7.1 0.7" stroke="#909090" stroke-width="1.4" fill="none"/></svg><div style="left:21px;top:287px;width:437px;height:284px;border:1px solid #fff;"></div><div style="left:20px;top:286px;width:437px;height:284px;border:1px solid #a0a0a0;"></div><div style="left:208px;top:285px;width:64px;height:4px;background:#f0f0f0;"></div><span id="Rtr" class="t ms " style="left:210.1px;top:280px;color:#000;transform:scaleX(0.9262);">Test Results</span><span id="Rlw" class="t ms " style="left:155.6px;top:296px;color:#000;transform:scaleX(0.9357);">Write</span><div style="left:189px;top:300px;width:25px;height:5px;background:#ff0000;"></div><span id="Rlr" class="t ms " style="left:239.0px;top:296px;color:#000;transform:scaleX(0.9241);">Read</span><div style="left:272px;top:300px;width:25px;height:5px;background:#008000;"></div><span id="Rhw" class="t ms " style="left:367.4px;top:296px;color:#000;transform:scaleX(0.9429);">Write</span><span id="Rhr" class="t ms " style="left:415.8px;top:296px;color:#000;transform:scaleX(0.9414);">Read</span><div style="left:59px;top:312px;width:300px;height:224px;background:#505050;"></div><div style="left:60px;top:313px;width:298px;height:222px;background:#fff;"></div><div style="left:89px;top:313px;width:1px;height:222px;background:#0000ff;"></div><div style="left:119px;top:313px;width:1px;height:222px;background:#0000ff;"></div><div style="left:149px;top:313px;width:1px;height:222px;background:#0000ff;"></div><div style="left:179px;top:313px;width:1px;height:222px;background:#0000ff;"></div><div style="left:209px;top:313px;width:1px;height:222px;background:#0000ff;"></div><div style="left:239px;top:313px;width:1px;height:222px;background:#0000ff;"></div><div style="left:269px;top:313px;width:1px;height:222px;background:#0000ff;"></div><div style="left:299px;top:313px;width:1px;height:222px;background:#0000ff;"></div><div style="left:329px;top:313px;width:1px;height:222px;background:#0000ff;"></div><span id="Ry0" class="t ms " style="left:40.7px;top:316px;color:#000;transform:scaleX(0.9000);">0.5</span><span id="Rw0" class="t ms " style="left:379.5px;top:316px;color:#000;transform:scaleX(0.9000);">7495</span><span id="Rr0" class="t ms " style="left:427.6px;top:316px;color:#000;transform:scaleX(0.9000);">7514</span><div style="left:60px;top:331px;width:1px;height:5px;background:#ff0000;"></div><div style="left:60px;top:336px;width:1px;height:5px;background:#008000;"></div><span id="Ry1" class="t ms " style="left:40.7px;top:331px;color:#000;transform:scaleX(0.9000);">1.0</span><span id="Rw1" class="t ms " style="left:373.5px;top:331px;color:#000;transform:scaleX(0.9182);">15104</span><span id="Rr1" class="t ms " style="left:421.6px;top:331px;color:#000;transform:scaleX(0.9182);">15066</span><div style="left:60px;top:346px;width:4px;height:5px;background:#ff0000;"></div><div style="left:60px;top:351px;width:3px;height:5px;background:#008000;"></div><span id="Ry2" class="t ms " style="left:40.7px;top:345px;color:#000;transform:scaleX(0.9000);">2.0</span><span id="Rw2" class="t ms " style="left:373.5px;top:345px;color:#000;transform:scaleX(0.9182);">36589</span><span id="Rr2" class="t ms " style="left:421.6px;top:345px;color:#000;transform:scaleX(0.9182);">30266</span><div style="left:60px;top:360px;width:9px;height:5px;background:#ff0000;"></div><div style="left:60px;top:365px;width:8px;height:5px;background:#008000;"></div><span id="Ry3" class="t ms " style="left:40.7px;top:360px;color:#000;transform:scaleX(0.9000);">4.0</span><span id="Rw3" class="t ms " style="left:373.5px;top:360px;color:#000;transform:scaleX(0.9182);">70674</span><span id="Rr3" class="t ms " style="left:421.6px;top:360px;color:#000;transform:scaleX(0.9182);">63172</span><div style="left:60px;top:375px;width:19px;height:5px;background:#ff0000;"></div><div style="left:60px;top:380px;width:16px;height:5px;background:#008000;"></div><span id="Ry4" class="t ms " style="left:40.7px;top:374px;color:#000;transform:scaleX(0.9000);">8.0</span><span id="Rw4" class="t ms " style="left:367.5px;top:374px;color:#000;transform:scaleX(0.9075);">139316</span><span id="Rr4" class="t ms " style="left:415.6px;top:374px;color:#000;transform:scaleX(0.9308);">119460</span><div style="left:60px;top:389px;width:35px;height:5px;background:#ff0000;"></div><div style="left:60px;top:394px;width:34px;height:5px;background:#008000;"></div><span id="Ry5" class="t ms " style="left:34.7px;top:389px;color:#000;transform:scaleX(0.9261);">16.0</span><span id="Rw5" class="t ms " style="left:367.5px;top:389px;color:#000;transform:scaleX(0.9075);">242145</span><span id="Rr5" class="t ms " style="left:415.6px;top:389px;color:#000;transform:scaleX(0.9075);">237005</span><div style="left:60px;top:404px;width:69px;height:5px;background:#ff0000;"></div><div style="left:60px;top:409px;width:55px;height:5px;background:#008000;"></div><span id="Ry6" class="t ms " style="left:34.7px;top:403px;color:#000;transform:scaleX(0.9261);">32.0</span><span id="Rw6" class="t ms " style="left:367.5px;top:403px;color:#000;transform:scaleX(0.9075);">467021</span><span id="Rr6" class="t ms " style="left:415.6px;top:403px;color:#000;transform:scaleX(0.9075);">375565</span><div style="left:60px;top:419px;width:93px;height:5px;background:#ff0000;"></div><div style="left:60px;top:424px;width:109px;height:5px;background:#008000;"></div><span id="Ry7" class="t ms " style="left:34.7px;top:418px;color:#000;transform:scaleX(0.9261);">64.0</span><span id="Rw7" class="t ms " style="left:367.5px;top:418px;color:#000;transform:scaleX(0.9075);">628886</span><span id="Rr7" class="t ms " style="left:415.6px;top:418px;color:#000;transform:scaleX(0.9075);">736624</span><div style="left:60px;top:433px;width:97px;height:5px;background:#ff0000;"></div><div style="left:60px;top:438px;width:122px;height:5px;background:#008000;"></div><span id="Ry8" class="t ms " style="left:28.7px;top:433px;color:#000;transform:scaleX(0.9100);">128.0</span><span id="Rw8" class="t ms " style="left:367.5px;top:433px;color:#000;transform:scaleX(0.9075);">654783</span><span id="Rr8" class="t ms " style="left:415.6px;top:433px;color:#000;transform:scaleX(0.9075);">825689</span><div style="left:60px;top:448px;width:98px;height:5px;background:#ff0000;"></div><div style="left:60px;top:453px;width:158px;height:5px;background:#008000;"></div><span id="Ry9" class="t ms " style="left:28.7px;top:447px;color:#000;transform:scaleX(0.9100);">256.0</span><span id="Rw9" class="t ms " style="left:367.5px;top:447px;color:#000;transform:scaleX(0.9075);">661250</span><span id="Rr9" class="t ms " style="left:409.6px;top:447px;color:#000;transform:scaleX(0.9000);">1064187</span><div style="left:60px;top:462px;width:96px;height:5px;background:#ff0000;"></div><div style="left:60px;top:467px;width:173px;height:5px;background:#008000;"></div><span id="Ry10" class="t ms " style="left:28.7px;top:462px;color:#000;transform:scaleX(0.9100);">512.0</span><span id="Rw10" class="t ms " style="left:367.5px;top:462px;color:#000;transform:scaleX(0.9075);">649964</span><span id="Rr10" class="t ms " style="left:409.6px;top:462px;color:#000;transform:scaleX(0.9196);">1164298</span><div style="left:60px;top:477px;width:96px;height:5px;background:#ff0000;"></div><div style="left:60px;top:482px;width:172px;height:5px;background:#008000;"></div><span id="Ry11" class="t ms " style="left:22.7px;top:476px;color:#000;transform:scaleX(0.9000);">1024.0</span><span id="Rw11" class="t ms " style="left:367.5px;top:476px;color:#000;transform:scaleX(0.9075);">649964</span><span id="Rr11" class="t ms " style="left:409.6px;top:476px;color:#000;transform:scaleX(0.9196);">1158714</span><div style="left:60px;top:491px;width:95px;height:5px;background:#ff0000;"></div><div style="left:60px;top:496px;width:147px;height:5px;background:#008000;"></div><span id="Ry12" class="t ms " style="left:22.7px;top:491px;color:#000;transform:scaleX(0.9000);">2048.0</span><span id="Rw12" class="t ms " style="left:367.5px;top:491px;color:#000;transform:scaleX(0.9075);">640657</span><span id="Rr12" class="t ms " style="left:415.6px;top:491px;color:#000;transform:scaleX(0.9075);">989319</span><div style="left:60px;top:506px;width:98px;height:5px;background:#ff0000;"></div><div style="left:60px;top:511px;width:182px;height:5px;background:#008000;"></div><span id="Ry13" class="t ms " style="left:22.7px;top:506px;color:#000;transform:scaleX(0.9000);">4096.0</span><span id="Rw13" class="t ms " style="left:367.5px;top:506px;color:#000;transform:scaleX(0.9308);">661171</span><span id="Rr13" class="t ms " style="left:409.6px;top:506px;color:#000;transform:scaleX(0.9000);">1223087</span><div style="left:60px;top:521px;width:98px;height:5px;background:#ff0000;"></div><div style="left:60px;top:526px;width:182px;height:5px;background:#008000;"></div><span id="Ry14" class="t ms " style="left:22.7px;top:521px;color:#000;transform:scaleX(0.9000);">8192.0</span><span id="Rw14" class="t ms " style="left:367.5px;top:521px;color:#000;transform:scaleX(0.9075);">664444</span><span id="Rr14" class="t ms " style="left:409.6px;top:521px;color:#000;transform:scaleX(0.9000);">1220161</span><span id="Rx0" class="t ms " style="left:55.5px;top:543px;color:#000;transform:scaleX(0.9000);">0</span><span id="Rx1" class="t ms " style="left:79.5px;top:543px;color:#000;transform:scaleX(0.9150);">200</span><span id="Rx2" class="t ms " style="left:109.5px;top:543px;color:#000;transform:scaleX(0.9150);">400</span><span id="Rx3" class="t ms " style="left:139.5px;top:543px;color:#000;transform:scaleX(0.9150);">600</span><span id="Rx4" class="t ms " style="left:169.5px;top:543px;color:#000;transform:scaleX(0.9150);">800</span><span id="Rx5" class="t ms " style="left:196.5px;top:543px;color:#000;transform:scaleX(0.9000);">1000</span><span id="Rx6" class="t ms " style="left:226.5px;top:543px;color:#000;transform:scaleX(0.9000);">1200</span><span id="Rx7" class="t ms " style="left:256.5px;top:543px;color:#000;transform:scaleX(0.9000);">1400</span><span id="Rx8" class="t ms " style="left:286.5px;top:543px;color:#000;transform:scaleX(0.9000);">1600</span><span id="Rx9" class="t ms " style="left:316.5px;top:543px;color:#000;transform:scaleX(0.9000);">1800</span><span id="Rx10" class="t ms " style="left:346.5px;top:543px;color:#000;transform:scaleX(0.9000);">2000</span><span id="Rax" class="t ms " style="left:143.4px;top:556px;color:#000;transform:scaleX(0.9152);">Transfer Rate - MB / Sec</span><span id="Rsb" class="t ui " style="left:8.8px;top:590px;color:#000;transform:scaleX(0.9333);">For Help, press F1</span><div style="left:399px;top:588px;width:27px;height:15px;border:1px solid;border-color:#a0a0a0 #ffffff #ffffff #a0a0a0"></div><div style="left:430px;top:588px;width:42px;height:15px;border:1px solid;border-color:#a0a0a0 #ffffff #ffffff #a0a0a0"></div><div style="left:461px;top:589px;width:12px;height:16px;background:#f0f0f0;"></div><div style="left:462px;top:588px;width:4px;height:1px;background:#f0f0f0;"></div><svg style="left:460px;top:592px" width="13" height="13" viewBox="0 0 13 13"><path d="M1 13 L13 1 M5 13 L13 5 M9 13 L13 9" stroke="#a0a0a0" stroke-width="1.2" fill="none"/><path d="M2 13 L13 2 M6 13 L13 6 M10 13 L13 10" stroke="#fff" stroke-width="1" fill="none"/></svg></div>
<div style="left:962px;top:0px;width:1px;height:613px;background:#2e2e36;"></div>
<div style="left:481px;top:612px;width:482px;height:1px;background:#2e2e36;"></div>
</body></html>
